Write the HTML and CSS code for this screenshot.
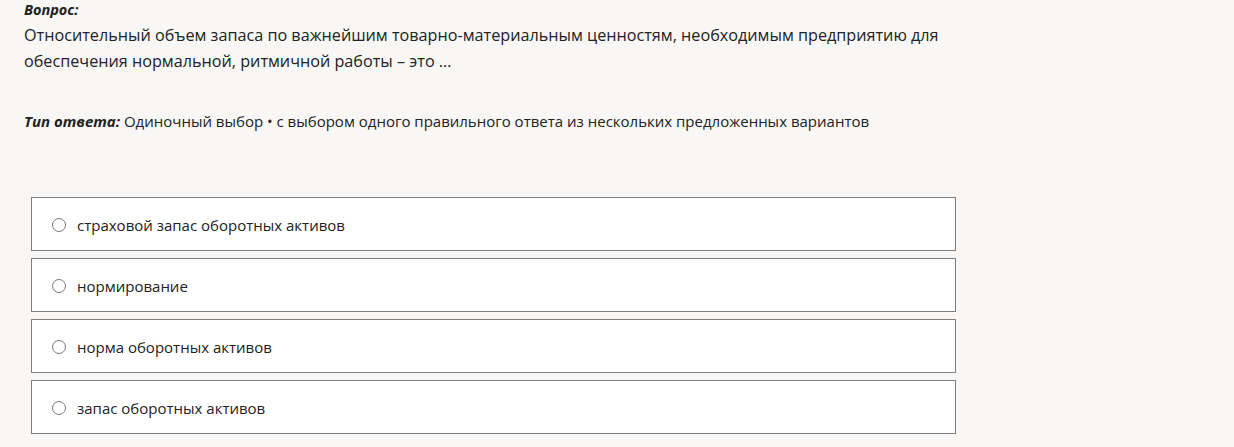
FILE: index.html
```html
<!DOCTYPE html>
<html lang="ru">
<head>
<meta charset="utf-8">
<link rel="stylesheet" href="styles.css">
</head>
<body>
<div class="page">
  <div class="question">
    <div class="label">Вопрос:</div>
    <div class="qtext">Относительный объем запаса по важнейшим товарно-материальным ценностям, необходимым предприятию для<br>обеспечения нормальной, ритмичной работы – это …</div>
  </div>
  <div class="type"><span class="label">Тип ответа:</span> Одиночный выбор • с выбором одного правильного ответа из нескольких предложенных вариантов</div>
  <div class="options">
    <label class="option"><span class="radio"></span><span>страховой запас оборотных активов</span></label>
    <label class="option"><span class="radio"></span><span>нормирование</span></label>
    <label class="option"><span class="radio"></span><span>норма оборотных активов</span></label>
    <label class="option"><span class="radio"></span><span>запас оборотных активов</span></label>
  </div>
</div>
</body>
</html>
```
FILE: styles.css
```css
html, body {
  margin: 0;
  padding: 0;
  background: #f8f7f5;
}
body {
  font-family: "Open Sans", "Noto Sans", sans-serif;
  color: #222;
}
.page {
  padding: 0 24px;
}
.label {
  font-weight: 700;
  font-style: italic;
}
.question .label {
  font-size: 14.5px;
  line-height: 20px;
}
.qtext {
  margin-top: 2px;
  font-size: 16.2px;
  line-height: 26px;
}
.type {
  margin-top: 37px;
  font-size: 15px;
  line-height: 20px;
}
.options {
  margin-top: 66px;
  margin-left: 7px;
  width: 925px;
  display: flex;
  flex-direction: column;
  gap: 7px;
}
.option {
  box-sizing: border-box;
  height: 54px;
  border: 1px solid #7d7d7d;
  background: #fff;
  display: flex;
  align-items: center;
  padding-left: 20px;
  padding-top: 2px;
  font-size: 15px;
  color: #222;
}
.radio {
  width: 12px;
  height: 12px;
  border: 1px solid #777;
  border-radius: 50%;
  margin-right: 11px;
  flex: none;
}
```
